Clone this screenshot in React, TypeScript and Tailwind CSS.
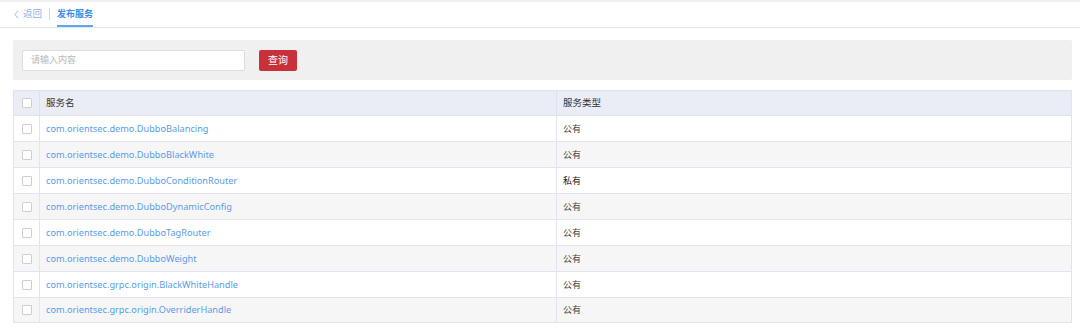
import React from "react";

const rows: { name: string; type: string }[] = [
  { name: "com.orientsec.demo.DubboBalancing", type: "公有" },
  { name: "com.orientsec.demo.DubboBlackWhite", type: "公有" },
  { name: "com.orientsec.demo.DubboConditionRouter", type: "私有" },
  { name: "com.orientsec.demo.DubboDynamicConfig", type: "公有" },
  { name: "com.orientsec.demo.DubboTagRouter", type: "公有" },
  { name: "com.orientsec.demo.DubboWeight", type: "公有" },
  { name: "com.orientsec.grpc.origin.BlackWhiteHandle", type: "公有" },
  { name: "com.orientsec.grpc.origin.OverriderHandle", type: "公有" },
];

function Box() {
  return <span className="block w-[10px] h-[10px] border border-[#cfcfcf] bg-white rounded-[1px]" />;
}

export default function App() {
  return (
    <div
      className="w-[1080px] h-[329px] bg-white overflow-hidden"
      style={{ fontFamily: '"Noto Sans", "Noto Sans CJK SC", sans-serif' }}
    >
      <div className="h-[2px] bg-[#f0f0f0]" />
      <div className="h-[26px] border-b border-[#e6e6e6] flex items-end pl-[13px]">
        <div className="flex items-center h-[25px] text-[9.5px] text-[#8fb3e6]">
          <svg width="7" height="9" viewBox="0 0 7 9" className="mr-[3px]">
            <path d="M5 1 L1.8 4.5 L5 8" fill="none" stroke="#9dbbe6" strokeWidth="1" />
          </svg>
          <span>返回</span>
        </div>
        <div className="w-px h-[12px] bg-[#d8d8d8] mx-[7px] mb-[7px]" />
        <div className="h-[25px] flex items-center text-[9px] text-[#3d8eea] font-bold border-b-2 border-[#5ea5f3]">
          发布服务
        </div>
      </div>

      <div className="pl-[13px] pr-[8px]">
        <div className="mt-[12px] h-[40px] bg-[#f0f0f0] rounded-[2px] flex items-center pl-[9px]">
          <div className="w-[223px] h-[21px] bg-white border border-[#dcdcdc] rounded-[2px] flex items-center pl-[8px] text-[9px] text-[#b8b8b8]">
            请输入内容
          </div>
          <div className="ml-[14px] w-[38px] h-[21px] bg-[#c8313a] rounded-[2px] flex items-center justify-center text-[10px] text-white">
            查询
          </div>
        </div>

        <div className="mt-[10px] border-x border-[#e1e4ef]">
          <div className="flex h-[26px] bg-[#eaedf6] border-y border-[#dfe2ee] text-[9.5px] text-[#333]">
            <div className="w-[26px] flex items-center justify-center border-r border-[#dfe2ee]">
              <Box />
            </div>
            <div className="w-[517px] flex items-center pl-[6px] border-r border-[#dfe2ee]">服务名</div>
            <div className="flex-1 flex items-center pl-[6px]">服务类型</div>
          </div>
          {rows.map((r, i) => (
            <div
              key={r.name}
              className={`flex ${i === rows.length - 1 ? "h-[25px]" : "h-[26px]"} text-[9.2px] border-b border-[#e4e4ee] ${
                i % 2 === 1 ? "bg-[#f6f6f6]" : "bg-white"
              }`}
            >
              <div className="w-[26px] flex items-center justify-center border-r border-[#e4e4ee]">
                <Box />
              </div>
              <div className="w-[517px] flex items-center pl-[6px] text-[#5a9ce8] border-r border-[#e4e4ee]">
                {r.name}
              </div>
              <div
                className={`flex-1 flex items-center pl-[6px] text-[9px] ${
                  r.type === "私有" ? "text-[#222]" : "text-[#444]"
                }`}
              >
                {r.type}
              </div>
            </div>
          ))}
        </div>
      </div>
    </div>
  );
}
